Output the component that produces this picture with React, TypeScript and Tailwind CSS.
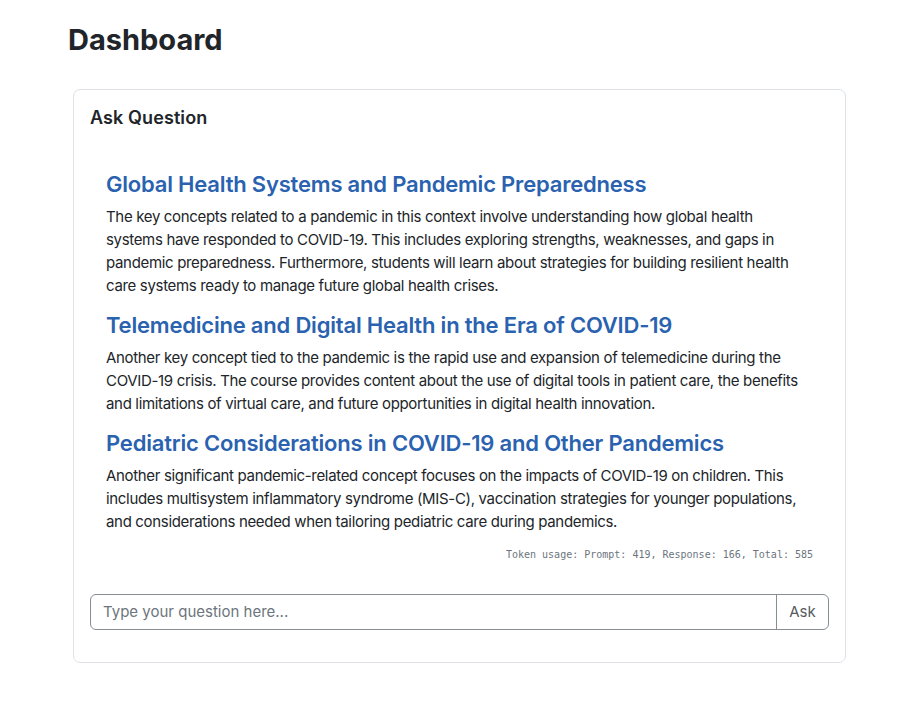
export default function App() {
  const sections = [
    {
      title: 'Global Health Systems and Pandemic Preparedness',
      body: 'The key concepts related to a pandemic in this context involve understanding how global health systems have responded to COVID-19. This includes exploring strengths, weaknesses, and gaps in pandemic preparedness. Furthermore, students will learn about strategies for building resilient health care systems ready to manage future global health crises.',
    },
    {
      title: 'Telemedicine and Digital Health in the Era of COVID-19',
      body: 'Another key concept tied to the pandemic is the rapid use and expansion of telemedicine during the COVID-19 crisis. The course provides content about the use of digital tools in patient care, the benefits and limitations of virtual care, and future opportunities in digital health innovation.',
    },
    {
      title: 'Pediatric Considerations in COVID-19 and Other Pandemics',
      body: 'Another significant pandemic-related concept focuses on the impacts of COVID-19 on children. This includes multisystem inflammatory syndrome (MIS-C), vaccination strategies for younger populations, and considerations needed when tailoring pediatric care during pandemics.',
    },
  ];

  return (
    <div className="min-h-screen bg-white font-['Inter',sans-serif] text-[#212529]">
      <div className="pl-[68px] pr-[72px] pt-[22px]">
        <h1 className="text-[29px] font-bold leading-[36px]">Dashboard</h1>

        <div className="mt-[31px] ml-[5px] rounded-[7px] border border-[#dee2e6] px-4 pt-[17px] pb-[32px]">
          <h5 className="text-[18px] font-semibold leading-[22px] tracking-[0.1px]">Ask Question</h5>

          <div className="mt-[26px] px-4 pt-4 pb-4">
            {sections.map((s) => (
              <div key={s.title}>
                <h2 className="text-[22px] font-semibold leading-[26px] text-[#2a62b0] tracking-[-0.2px]">{s.title}</h2>
                <p className="mt-[8px] mb-[15px] text-[15px] leading-[23px] tracking-[-0.33px]">{s.body}</p>
              </div>
            ))}
            <div className="mt-[1px] text-right font-['DejaVu_Sans_Mono',monospace] text-[10px] leading-[13px] text-[#6c757d]">
              Token usage: Prompt: 419, Response: 166, Total: 585
            </div>
          </div>

          <div className="mt-[17px] flex h-[36px] rounded-[6px] border border-[#868e96]">
            <input
              className="min-w-0 flex-1 rounded-l-[6px] bg-transparent px-3 text-[15px] text-[#212529] outline-none placeholder:text-[#6c757d]"
              placeholder="Type your question here..."
            />
            <button className="w-[52px] border-l border-[#868e96] text-[15px] text-[#555b61]">Ask</button>
          </div>
        </div>
      </div>
    </div>
  );
}
